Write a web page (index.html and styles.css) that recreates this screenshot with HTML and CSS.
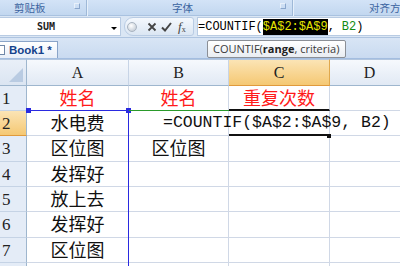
FILE: index.html
```html
<!DOCTYPE html>
<html>
<head>
<meta charset="utf-8">
<link rel="stylesheet" href="styles.css">
</head>
<body>
<div class="app">
  <div class="ribbon">
    <div class="group g1"><span class="glabel">剪贴板</span><span class="launch"></span></div>
    <div class="group g2"><span class="glabel">字体</span><span class="launch"></span></div>
    <div class="group g3"><span class="glabel">对齐方式</span></div>
  </div>
  <div class="fbar">
    <div class="namebox"><span class="nametext">SUM</span><span class="drop"></span></div>
    <div class="fbtns">
      <span class="knob"></span>
      <svg class="ico" width="10" height="10" viewBox="0 0 10 10"><path d="M1.5 1.5 L8.5 8.5 M8.5 1.5 L1.5 8.5" stroke="#444" stroke-width="1.8" fill="none"/></svg>
      <svg class="ico" width="11" height="10" viewBox="0 0 11 10"><path d="M1 5.5 L4 8.5 L10 1" stroke="#444" stroke-width="2" fill="none"/></svg>
      <span class="fx"><i>f</i><sub>x</sub></span>
    </div>
    <div class="finput">=COUNTIF(<span class="hl">$A$2:$A$9</span>,<span class="grn">B2</span>)</div>
  </div>
  <div class="tabbar">
    <div class="tab"><span class="docico"></span>Book1 *</div>
  </div>
  <div class="tip">COUNTIF(<b>range</b>, criteria)</div>
  <div class="sheet">
    <div class="grid">
      <div class="c corner"><span class="tri"></span></div>
      <div class="c ch">A</div>
      <div class="c ch">B</div>
      <div class="c ch sel">C</div>
      <div class="c ch">D</div>

      <div class="c rh">1</div>
      <div class="c red">姓名</div>
      <div class="c red">姓名</div>
      <div class="c red under">重复次数</div>
      <div class="c"></div>

      <div class="c rh sel">2</div>
      <div class="c">水电费</div>
      <div class="c formula"><span>=COUNTIF($A$2:$A$9, B2)</span></div>
      <div class="c under"></div>
      <div class="c"></div>

      <div class="c rh">3</div>
      <div class="c">区位图</div>
      <div class="c">区位图</div>
      <div class="c"></div>
      <div class="c"></div>

      <div class="c rh">4</div>
      <div class="c">发挥好</div>
      <div class="c"></div>
      <div class="c"></div>
      <div class="c"></div>

      <div class="c rh">5</div>
      <div class="c">放上去</div>
      <div class="c"></div>
      <div class="c"></div>
      <div class="c"></div>

      <div class="c rh">6</div>
      <div class="c">发挥好</div>
      <div class="c"></div>
      <div class="c"></div>
      <div class="c"></div>

      <div class="c rh">7</div>
      <div class="c">区位图</div>
      <div class="c"></div>
      <div class="c"></div>
      <div class="c"></div>

      <div class="c rh"></div>
      <div class="c"></div>
      <div class="c"></div>
      <div class="c"></div>
      <div class="c"></div>
    </div>
    <div class="rangebox"></div>
    <span class="hd hd1"></span>
    <span class="hd hd2"></span>
    <div class="editbox"></div>
    <span class="fill"></span>
  </div>
</div>
</body>
</html>
```
FILE: styles.css
```css
* { box-sizing: border-box; }
html, body { margin: 0; padding: 0; }
body { width: 400px; height: 266px; overflow: hidden; background: #fff; font-family: "Noto Sans CJK SC", sans-serif; }
.app { position: relative; width: 400px; height: 266px; overflow: hidden; }

.ribbon { display: flex; height: 16px; background: linear-gradient(#d3e3f7, #c2d7ef); border-bottom: 1px solid #a9c2e0; }
.group { position: relative; height: 16px; border-right: 1px solid #9fb9d8; box-shadow: 1px 0 0 #e6f0fb; }
.g1 { width: 87px; }
.g2 { width: 203px; margin-left: 3px; }
.g3 { flex: 1; margin-left: 3px; border-right: none; box-shadow: none; }
.glabel { position: absolute; top: 0; font-size: 10.5px; line-height: 15px; color: #3b64a0; white-space: nowrap; }
.g1 .glabel { left: 14px; }
.g2 .glabel { left: 82px; }
.g3 .glabel { left: 73px; }
.launch { position: absolute; right: 6px; top: 3px; width: 6px; height: 6px; border: 1px solid #8aa6cc; border-left-color: #e8f0fa; border-top-color: #e8f0fa; }

.fbar { display: flex; height: 22px; background: #dae6f4; padding: 1px 0 1px 0; border-bottom: 1px solid #aec4e0; }
.namebox { position: relative; width: 121px; background: #fff; border: 1px solid #b8cbe3; border-left: none; }
.nametext { position: absolute; left: 37px; top: 3px; font-family: "DejaVu Sans Mono", monospace; font-size: 10px; font-weight: bold; color: #222; }
.drop { position: absolute; right: 3px; top: 9px; border-left: 3px solid transparent; border-right: 3px solid transparent; border-top: 3px solid #000; }
.fbtns { display: flex; align-items: center; gap: 4px; width: 70px; margin-left: 3px; padding-left: 2px; background: linear-gradient(#f4f8fd, #dbe6f3); border: 1px solid #b9cce4; border-radius: 9px 3px 3px 9px; }
.knob { width: 10px; height: 10px; border-radius: 50%; background: radial-gradient(circle at 40% 35%, #ffffff, #b8c2ce); border: 1px solid #a8b3c0; margin-right: 6px; }
.ico { display: block; }
.fx { font-family: "Liberation Serif", serif; font-size: 13px; color: #444; line-height: 1; margin-left: 2px; }
.fx sub { font-size: 8px; vertical-align: -1px; }
.finput { flex: 1; margin-left: 3px; background: #fff; border: 1px solid #b8cbe3; border-right: none; font-family: "Liberation Mono", monospace; font-size: 12px; line-height: 18px; color: #000; white-space: nowrap; }
.hl { background: #000; color: #e4e400; padding: 1px 0; }
.grn { color: #108a10; margin-left: 7px; }

.tabbar { height: 21px; background: linear-gradient(#d8e5f5, #c9daf0); border-bottom: 1px solid #a3bde0; padding-top: 3px; }
.tab { display: flex; align-items: center; gap: 4px; width: 58px; height: 17px; background: linear-gradient(#ffffff, #e7eef8); border: 1px solid #8aa4c8; border-left: none; border-bottom: none; font-family: "Liberation Sans", sans-serif; font-size: 11.5px; font-weight: bold; color: #15428b; }
.docico { width: 5px; height: 10px; border: 1px solid #6f87a8; border-left: none; background: #fff; }

.tip { position: absolute; left: 207px; top: 40px; width: 139px; height: 18px; background: linear-gradient(#ffffff, #e9edf2); border: 1px solid #8b8f96; border-radius: 2px; font-family: "Open Sans", "Liberation Sans", sans-serif; font-size: 11px; line-height: 16px; padding-left: 5px; color: #3a3a3a; white-space: nowrap; }
.tip b { color: #222; }

.sheet { position: relative; }
.grid { display: grid; grid-template-columns: 27px 102px 100px 101px 80px; grid-template-rows: 27px 25px 25px 26px 25px 25px 26px 25px 25px; }
.c { border-right: 1px solid #d0d8e6; border-bottom: 1px solid #d0d8e6; font-size: 18px; line-height: 23px; text-align: center; color: #111; white-space: nowrap; }
.corner { position: relative; background: linear-gradient(#e9eff8, #dbe5f2); border-right: 1px solid #9eb6ce; border-bottom: 1px solid #9eb6ce; border-top: 1px solid #b3c6de; }
.tri { position: absolute; right: 3px; bottom: 3px; border-left: 14px solid transparent; border-bottom: 14px solid #b9cbe2; }
.ch { background: linear-gradient(#f6f9fd, #e1e9f4); border-top: 1px solid #b3c6de; border-bottom: 1px solid #9eb6ce; border-right-color: #c7d4e6; font-family: "Liberation Serif", serif; font-size: 16px; line-height: 26px; color: #222; }
.ch.sel { background: linear-gradient(#fbe4b5, #f5c873); border-right-color: #e0a84c; border-bottom-color: #e09a3c; }
.rh { background: #e4ecf7; border-right: 1px solid #9eb6ce; border-bottom-color: #c5d3e5; font-family: "Liberation Serif", serif; font-size: 17px; line-height: 25px; text-align: left; padding-left: 2px; color: #222; }
.rh.sel { background: linear-gradient(#fbe4b5, #f5c873); border-bottom-color: #e09a3c; }
.red { color: #ff1a1a; }
.under { border-bottom: 2px solid #111; }
.formula { overflow: visible; text-align: left; padding-left: 34px; font-family: "Liberation Mono", monospace; font-size: 16.5px; line-height: 24px; position: relative; z-index: 2; }

.rangebox { position: absolute; left: 27px; top: 51px; width: 102px; height: 230px; border-top: 1px solid #2a2ae0; border-right: 1px solid #2a2ae0; pointer-events: none; }
.hd { position: absolute; width: 5px; height: 5px; background: #2a2ae0; top: 49px; }
.hd1 { left: 26px; }
.hd2 { left: 126px; }
.editbox { position: absolute; left: 129px; top: 51px; width: 100px; height: 26px; border-top: 1px solid #2a9a2a; border-bottom: 1px solid #2a9a2a; }
.fill { position: absolute; left: 327px; top: 75px; width: 4px; height: 4px; background: #111; }
```
